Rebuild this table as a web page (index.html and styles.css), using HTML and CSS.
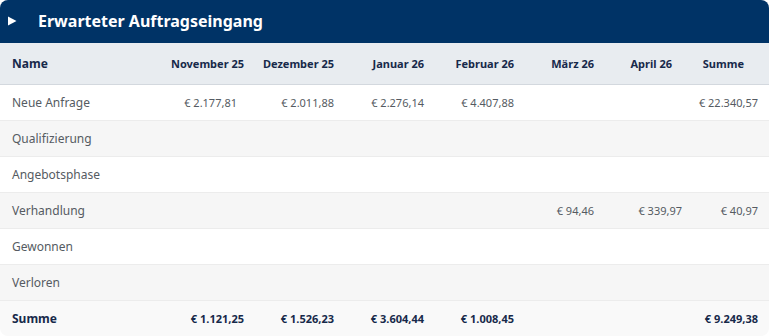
FILE: index.html
```html
<!DOCTYPE html>
<html lang="de">
<head>
<meta charset="utf-8">
<link rel="stylesheet" href="styles.css">
</head>
<body>
<div class="card">
  <div class="card-head">
    <svg class="caret" width="10" height="10" viewBox="0 0 10 10"><path d="M1 0.5 L9.5 5 L1 9.5 Z" fill="#fff"/></svg>
    <span class="title">Erwarteter Auftragseingang</span>
  </div>
  <table class="grid">
    <thead>
      <tr>
        <th class="name w-name">Name</th>
        <th class="w-first">November 25</th>
        <th class="w-90">Dezember 25</th>
        <th class="w-90">Januar 26</th>
        <th class="w-90">Februar 26</th>
        <th class="w-80">März 26</th>
        <th class="w-78">April 26</th>
        <th class="last">Summe</th>
      </tr>
    </thead>
    <tbody>
      <tr><td class="name">Neue Anfrage</td><td class="nudge">€ 2.177,81</td><td>€ 2.011,88</td><td>€ 2.276,14</td><td>€ 4.407,88</td><td></td><td class="apr"></td><td class="last">€ 22.340,57</td></tr>
      <tr><td class="name">Qualifizierung</td><td></td><td></td><td></td><td></td><td></td><td class="apr"></td><td class="last"></td></tr>
      <tr><td class="name">Angebotsphase</td><td></td><td></td><td></td><td></td><td></td><td class="apr"></td><td class="last"></td></tr>
      <tr><td class="name">Verhandlung</td><td></td><td></td><td></td><td></td><td>€ 94,46</td><td class="apr">€ 339,97</td><td class="last">€ 40,97</td></tr>
      <tr><td class="name">Gewonnen</td><td></td><td></td><td></td><td></td><td></td><td class="apr"></td><td class="last"></td></tr>
      <tr><td class="name">Verloren</td><td></td><td></td><td></td><td></td><td></td><td class="apr"></td><td class="last"></td></tr>
    </tbody>
    <tfoot>
      <tr><td class="name">Summe</td><td>€ 1.121,25</td><td>€ 1.526,23</td><td>€ 3.604,44</td><td>€ 1.008,45</td><td></td><td class="apr"></td><td class="last">€ 9.249,38</td></tr>
    </tfoot>
  </table>
</div>
</body>
</html>
```
FILE: styles.css
```css
html, body {
  margin: 0;
  padding: 0;
  background: #ffffff;
}
body {
  font-family: "Noto Sans", "Open Sans", sans-serif;
  width: 769px;
  height: 336px;
  overflow: hidden;
}
.card {
  width: 769px;
  height: 336px;
  box-sizing: border-box;
  border-radius: 8px;
  overflow: hidden;
  background: #fff;
  display: flex;
  flex-direction: column;
}
.card-head {
  height: 43px;
  background: #003366;
  display: flex;
  align-items: center;
  padding-left: 7px;
  flex: none;
}
.caret {
  display: block;
  margin-top: -2px;
}
.title {
  margin-left: 21px;
  color: #fff;
  font-weight: 700;
  font-size: 16px;
  margin-top: -2px;
}
.grid {
  border-collapse: collapse;
  table-layout: fixed;
  width: 769px;
}
th, td {
  box-sizing: border-box;
  padding: 0 12px 0 0;
  text-align: right;
  white-space: nowrap;
}
.w-name { width: 154px; }
.w-first { width: 102px; }
.w-90 { width: 90px; }
.w-80 { width: 80px; }
.w-78 { width: 78px; }
th {
  height: 41px;
  background: #e8ecf0;
  border-bottom: 1px solid #d3d8de;
  color: #17294a;
  font-size: 11px;
  font-weight: 700;
}
td {
  height: 36px;
  border-bottom: 1px solid #ececec;
  color: #555b62;
  font-size: 11px;
}
tbody tr:nth-child(odd) td { background: #ffffff; }
tbody tr:nth-child(even) td { background: #f6f6f6; }
tfoot td {
  background: #f9f9f9;
  color: #17294a;
  font-weight: 700;
}
th.name, td.name {
  text-align: left;
  padding-left: 12px;
  font-size: 12px;
}
th.last { padding-right: 25px; }
td.last { padding-right: 11px; }
td.apr { padding-right: 2px; }
td.nudge { padding-right: 19px; }
```
